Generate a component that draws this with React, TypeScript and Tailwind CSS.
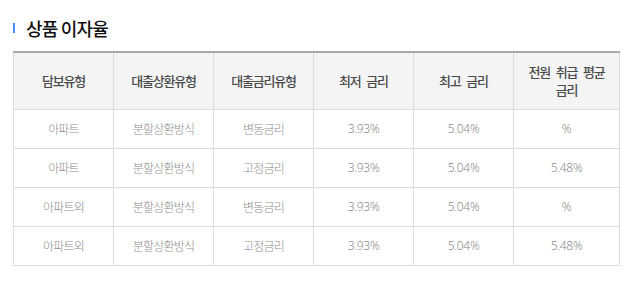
import React from "react";

const headers = ["담보유형", "대출상환유형", "대출금리유형", "최저 금리", "최고 금리"];
const rows = [
  ["아파트", "분할상환방식", "변동금리", "3.93%", "5.04%", "%"],
  ["아파트", "분할상환방식", "고정금리", "3.93%", "5.04%", "5.48%"],
  ["아파트외", "분할상환방식", "변동금리", "3.93%", "5.04%", "%"],
  ["아파트외", "분할상환방식", "고정금리", "3.93%", "5.04%", "5.48%"],
];

const thCls =
  "border border-[#dcdcdc] border-t-0 p-0 text-[13px] leading-[18px] font-medium tracking-[-1.2px] [word-spacing:4px] text-[#4a4a4a] font-['Noto_Sans_CJK_KR',sans-serif]";

export default function App() {
  return (
    <div className="w-[634px] h-[282px] bg-white pl-[13px] pt-[18px] font-['Noto_Sans','Noto_Sans_CJK_KR',sans-serif]">
      <div className="flex items-center h-[20px]">
        <div className="w-[2px] h-[10px] bg-[#4a8ef0]" />
        <h2 className="ml-[11px] text-[18px] leading-[20px] font-medium tracking-[-0.8px] text-[#111] font-['Noto_Sans_CJK_KR',sans-serif]">
          상품 이자율
        </h2>
      </div>
      <table className="mt-[13px] w-[606px] border-collapse table-fixed border-t-2 border-t-[#a8a8a8]">
        <colgroup>
          <col className="w-[100px]" />
          <col className="w-[100px]" />
          <col className="w-[100px]" />
          <col className="w-[100px]" />
          <col className="w-[100px]" />
          <col className="w-[106px]" />
        </colgroup>
        <thead>
          <tr className="h-[57px] bg-[#f4f4f4]">
            {headers.map((h) => (
              <th key={h} className={thCls}>
                {h}
              </th>
            ))}
            <th className={thCls}>
              전원 취급 평균
              <br />
              금리
            </th>
          </tr>
        </thead>
        <tbody>
          {rows.map((r, i) => (
            <tr key={i} className="h-[39px]">
              {r.map((c, j) => (
                <td
                  key={j}
                  className={
                    j < 3
                      ? "border border-[#dcdcdc] p-0 text-center text-[12px] font-light tracking-[-0.8px] text-[#8c8c8c] font-['Noto_Sans_CJK_KR',sans-serif]"
                      : "border border-[#dcdcdc] p-0 text-center text-[12px] font-light tracking-[-0.3px] text-[#8c8c8c] font-['Noto_Sans','Noto_Sans_CJK_KR',sans-serif]"
                  }
                >
                  {c}
                </td>
              ))}
            </tr>
          ))}
        </tbody>
      </table>
    </div>
  );
}
